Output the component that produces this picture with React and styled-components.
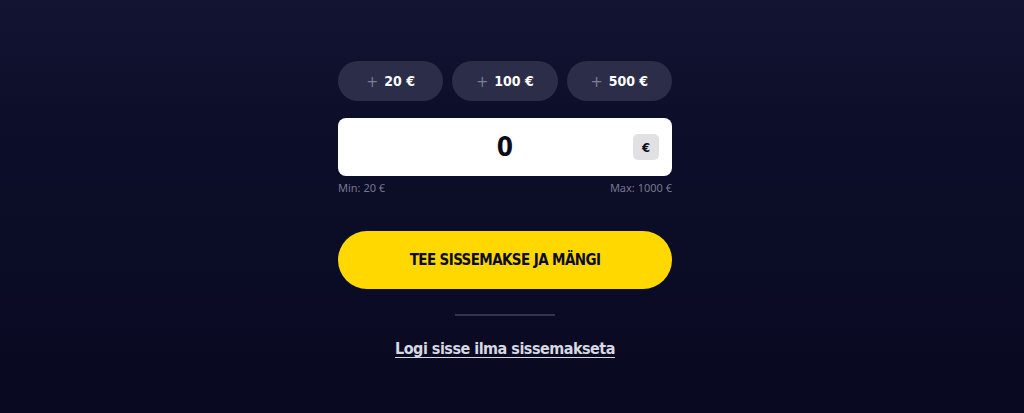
import styled, { createGlobalStyle } from 'styled-components'

const GlobalStyle = createGlobalStyle`
   html, body {
      margin: 0;
      padding: 0;
      height: 100%;
   }
   body {
      background: linear-gradient(180deg, #121432 0%, #0c0d28 35%, #090a21 100%);
      font-family: 'DejaVu Sans Condensed', 'DejaVu Sans', sans-serif;
   }
`

const amounts = [20, 100, 500]

const App = () => {
   return (
      <Page>
         <GlobalStyle />
         <Form>
            <Chips>
               {amounts.map((a) => (
                  <Chip key={a}>
                     <Plus>+</Plus>
                     {a} €
                  </Chip>
               ))}
            </Chips>
            <AmountBox>
               <Value>0</Value>
               <Currency>€</Currency>
            </AmountBox>
            <Limits>
               <span>Min: 20 €</span>
               <span>Max: 1000 €</span>
            </Limits>
            <DepositButton>TEE SISSEMAKSE JA MÄNGI</DepositButton>
            <Divider />
            <LoginLink href='#'>Logi sisse ilma sissemakseta</LoginLink>
         </Form>
      </Page>
   )
}

export default App

const Page = styled.main`
   min-height: 413px;
   display: flex;
   justify-content: center;
   padding: 61px 14px 0 0;
   box-sizing: border-box;
`

const Form = styled.div`
   width: 334px;
   display: flex;
   flex-direction: column;
   align-items: center;
`

const Chips = styled.div`
   width: 100%;
   display: grid;
   grid-template-columns: repeat(3, 1fr);
   gap: 9px;
`

const Chip = styled.button`
   height: 40px;
   border: none;
   border-radius: 20px;
   background: #2c2d48;
   color: #ffffff;
   font-family: inherit;
   font-weight: 700;
   font-size: 14px;
   display: flex;
   align-items: center;
   justify-content: center;
   gap: 6px;
   cursor: pointer;
`

const Plus = styled.span`
   color: #7d7e94;
   font-weight: 400;
   font-size: 16px;
`

const AmountBox = styled.div`
   margin-top: 17px;
   width: 100%;
   height: 58px;
   background: #ffffff;
   border-radius: 8px;
   position: relative;
   display: flex;
   align-items: center;
   justify-content: center;
`

const Value = styled.span`
   font-size: 26px;
   font-weight: 700;
   color: #0b0c1a;
`

const Currency = styled.span`
   position: absolute;
   right: 13px;
   top: 16px;
   width: 26px;
   height: 26px;
   border-radius: 5px;
   background: #e1e1e3;
   color: #0b0c1a;
   font-size: 13px;
   font-weight: 700;
   display: flex;
   align-items: center;
   justify-content: center;
`

const Limits = styled.div`
   width: 100%;
   display: flex;
   justify-content: space-between;
   margin-top: 4px;
   font-size: 11px;
   color: #77788e;
   font-family: 'Noto Sans', sans-serif;
`

const DepositButton = styled.button`
   margin-top: 36px;
   width: 100%;
   height: 58px;
   border: none;
   border-radius: 29px;
   background: #ffd800;
   color: #0b0c1f;
   font-family: inherit;
   font-weight: 700;
   font-size: 15px;
   letter-spacing: -0.6px;
   cursor: pointer;
`

const Divider = styled.hr`
   margin: 25px 0 0;
   width: 100px;
   height: 2px;
   border: none;
   background: #33344f;
`

const LoginLink = styled.a`
   margin-top: 23px;
   color: #d7d8e2;
   font-size: 16px;
   font-weight: 700;
   letter-spacing: -0.5px;
   text-decoration: underline;
   text-underline-offset: 3px;
`
